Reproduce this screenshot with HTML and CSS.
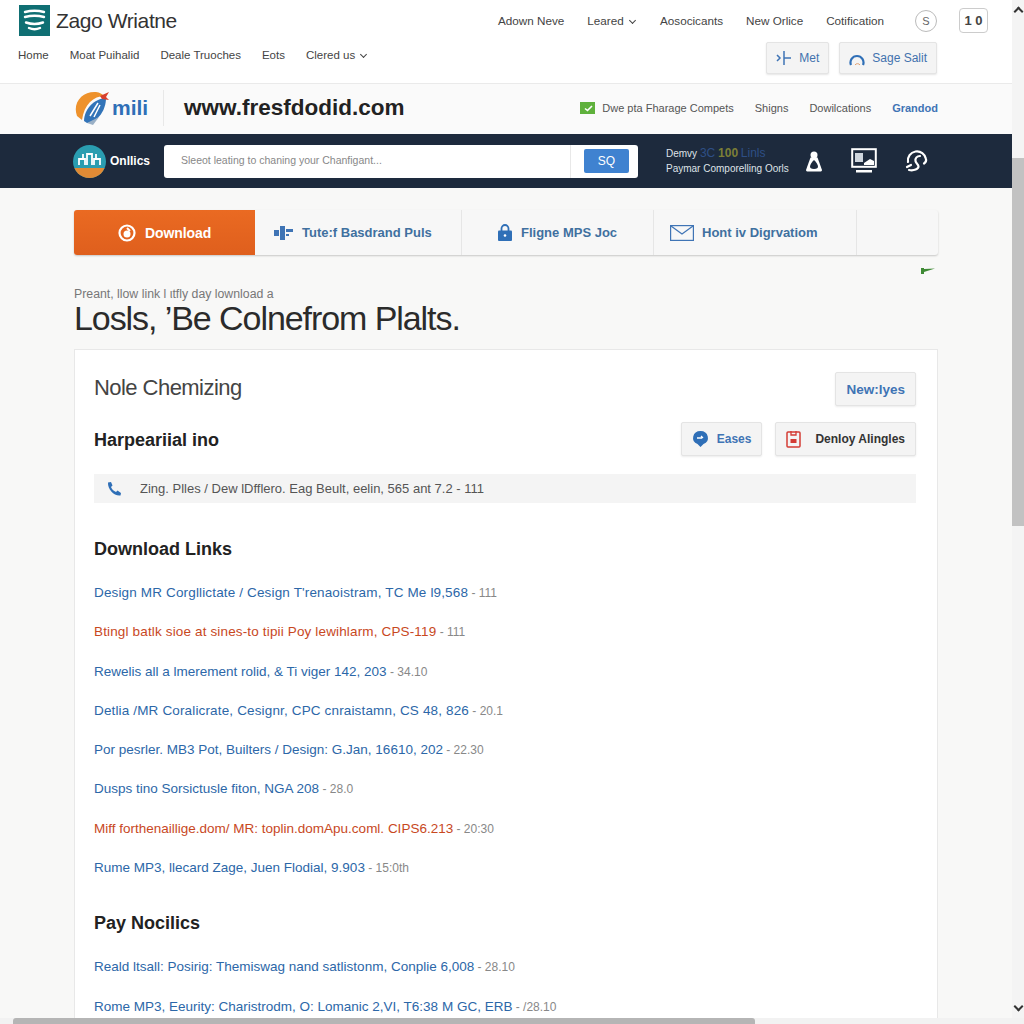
FILE: index.html
```html
<!DOCTYPE html>
<html lang="en">
<head>
    <meta charset="UTF-8">
    <meta name="viewport" content="width=device-width, initial-scale=1.0">
    <title>Zago Wriatne</title>
    <link rel="stylesheet" href="styles.css">
</head>
<body>
<div class="window">
    <div class="page">
        <header class="site-header">
            <div class="header-row">
                <div class="brand">
                    <svg class="brand-logo" viewBox="0 0 31 31">
                        <rect width="31" height="31" fill="#0f6f73"/>
                        <path d="M6 7q9.500-2.500 19 0M6 12q9.500-2.500 19 0M7 17.500q8.500 3 17 0M10 23q5.500 2.500 11 0" fill="none" stroke="#fff" stroke-width="2.4" stroke-linecap="round"/>
                    </svg>
                    <span class="brand-name">Zago Wriatne</span>
                </div>
                <nav class="top-nav">
                    <a>Adown Neve</a>
                    <a>Leared <span class="caret"></span></a>
                    <a>Aosocicants</a>
                    <a>New Orlice</a>
                    <a>Cotification</a>
                    <span class="round-icon">S</span>
                    <span class="count-box">1 0</span>
                </nav>
            </div>
            <div class="header-row second">
                <nav class="main-nav">
                    <a>Home</a>
                    <a>Moat Puihalid</a>
                    <a>Deale Truoches</a>
                    <a>Eots</a>
                    <a>Clered us <span class="caret"></span></a>
                </nav>
                <div class="header-btns">
                    <a class="small-btn">
                        <svg width="16" height="16" viewBox="0 0 16 16"><path d="M8 1v14M8 8h7M1 5l3 3-3 3" fill="none" stroke="#3f74b5" stroke-width="1.5"/></svg>
                        Met
                    </a>
                    <a class="small-btn">
                        <svg width="16" height="16" viewBox="0 0 16 16"><path d="M2 15A6.500 6.500 0 1 1 14 15" fill="none" stroke="#2f6fb7" stroke-width="2.2"/><path d="M6 15a3 3 0 0 1 5 0" fill="none" stroke="#e0a070" stroke-width="1"/></svg>
                        Sage Salit
                    </a>
                </div>
            </div>
        </header>

        <div class="domain-band">
            <div class="wrap domain-inner">
                <div class="mili">
                    <svg width="38" height="36" viewBox="0 0 38 36">
                        <path d="M3 26C-2 12 9 1 22 2c4 .5 6 2 8 4C20 6 10 14 8 30z" fill="#ee922c"/>
                        <path d="M10 31C10 20 19 9 32 8c0 12-8 24-19 25z" fill="#3274b8"/>
                        <path d="M16 26l8-13M20 27l6-12" stroke="#fff" stroke-width="1.5"/>
                        <path d="M26 6l9-4-3 5 3 3-7-1z" fill="#d8402c"/>
                        <path d="M13 33l6 2 6-8z" fill="#9ab0c6"/>
                    </svg>
                    <span>mili</span>
                </div>
                <div class="domain-name">www.fresfdodid.com</div>
                <div class="domain-links">
                    <span class="check"><svg width="14" height="11" viewBox="0 0 14 11"><path d="M4 5.500l2.500 2L11 3" fill="none" stroke="#fff" stroke-width="1.6"/></svg></span>
                    <a class="first">Dwe pta Fharage Compets</a>
                    <a>Shigns</a>
                    <a>Dowilcations</a>
                    <a class="active">Grandod</a>
                </div>
            </div>
        </div>

        <div class="search-band">
            <div class="wrap search-inner">
                <div class="onlics">
                    <svg width="33" height="33" viewBox="0 0 33 33">
                        <clipPath id="disc"><circle cx="16.5" cy="16.5" r="16.5"/></clipPath>
                        <g clip-path="url(#disc)">
                            <rect width="33" height="33" fill="#2a9db0"/>
                            <rect y="23" width="33" height="10" fill="#e08a35"/>
                            <path d="M6 20v-6h6v6M14 20V9h5v11M21 20v-6h6v6M10 14V9M23 14V9" fill="none" stroke="#fff" stroke-width="1.8"/>
                        </g>
                    </svg>
                    <span>Onllics</span>
                </div>
                <div class="search-box">
                    <span class="search-text">Sleeot leating to chaning your Chanfigant...</span>
                    <span class="search-action"><span class="search-go">SQ</span></span>
                </div>
                <div class="promo">
                    <div>Demvy <span class="promo-blue">3C</span> <span class="promo-olive">100</span> <span class="promo-blue">Linls</span></div>
                    <div>Paymar Comporelling Oorls</div>
                </div>
                <div class="band-icons">
                    <svg width="18" height="21" viewBox="0 0 18 21"><circle cx="9" cy="4" r="3.5" fill="#fff"/><path d="M5.500 6.500L1 19c0 1 1 1.500 2 1.500h12c1 0 2-.5 2-1.500L12.500 6.500z" fill="#fff"/><path d="M9 9c-2 2-4 4.500-4 6.500 0 1.500 1 2.500 4 2.500s4-1 4-2.500C13 13.500 11 11 9 9z" fill="#1d2a3d"/></svg>
                    <svg width="26" height="26" viewBox="0 0 26 26"><rect x="1.200" y="1.200" width="23.600" height="17.600" fill="none" stroke="#fff" stroke-width="2"/><rect x="4" y="5" width="8" height="9" fill="#cfd6de"/><path d="M13 15l6-4 4 2v4H13z" fill="#fff"/><path d="M5 22h16v2.500H5z" fill="#fff"/></svg>
                    <svg width="24" height="25" viewBox="0 0 24 25"><path d="M3 13A9 9 0 0 1 21 10c.5 2-.5 3.500-2 4.500" fill="none" stroke="#fff" stroke-width="2.2" stroke-linecap="round"/><path d="M15 7c-3 0-5 2-4.500 5 .4 2.500 3 3 3 5.500S9 22 4 21" fill="none" stroke="#fff" stroke-width="2.2" stroke-linecap="round"/><path d="M2 18l4-2" stroke="#fff" stroke-width="2.2" stroke-linecap="round"/></svg>
                </div>
            </div>
        </div>

        <main class="wrap content">
            <div class="tabs">
                <a class="tab tab-download">
                    <svg width="18" height="18" viewBox="0 0 18 18"><circle cx="9" cy="9" r="7.500" fill="none" stroke="#fff" stroke-width="2.2"/><circle cx="9" cy="10" r="3.500" fill="#fff"/><path d="M9 4l3 3" stroke="#fff" stroke-width="2"/></svg>
                    Download
                </a>
                <a class="tab tab-tute">
                    <svg width="20" height="16" viewBox="0 0 20 16"><path d="M0 5h5v6H0zM6 1h5v14H6zM12 4h7v3h-7zM12 9h3v2h-3z" fill="#3f74b5"/></svg>
                    Tute:f Basdrand Puls
                </a>
                <a class="tab tab-flig">
                    <svg width="14" height="17" viewBox="0 0 14 17"><path d="M3.500 7V4.500a3.500 3.500 0 0 1 7 0V7" fill="none" stroke="#2f6fb7" stroke-width="1.8"/><rect y="6.500" width="14" height="10.500" rx="1" fill="#2f6fb7"/><circle cx="7" cy="11.500" r="1.300" fill="#fff"/></svg>
                    Fligne MPS Joc
                </a>
                <a class="tab tab-hom">
                    <svg width="24" height="16" viewBox="0 0 24 16"><rect x=".6" y=".6" width="22.800" height="14.800" fill="none" stroke="#3f74b5" stroke-width="1.2"/><path d="M1 1l11 8 11-8" fill="none" stroke="#3f74b5" stroke-width="1.2"/></svg>
                    Hont iv Digrvatiom
                </a>
                <span class="tab tab-empty"></span>
            </div>
            <div class="flag-row">
                <svg width="14" height="6" viewBox="0 0 14 6"><path d="M0 0h3v6H0zM3 1l11-.500L3 4z" fill="#3f8a35"/></svg>
            </div>

            <p class="intro">Preant, llow link l ιtfly day lownload a</p>
            <h1 class="headline">Losls, &rsquo;Be Colnefrom Plalts.</h1>

            <section class="card">
                <div class="card-row first-row">
                    <h2 class="light-title">Nole Chemizing</h2>
                    <a class="btn btn-blue btn-wide">New:lyes</a>
                </div>
                <div class="card-row second-row">
                    <h3>Harpeariial ino</h3>
                    <div class="btn-group">
                        <a class="btn btn-blue">
                            <svg width="17" height="18" viewBox="0 0 17 18"><path d="M8.500 1a7.500 6.800 0 0 1 3 13l-3 3-3-3a7.500 6.800 0 0 1 3-13z" fill="#2f6fb7"/><path d="M5 8h5M9 6l2 2" stroke="#fff" stroke-width="1.3"/></svg>
                            Eases
                        </a>
                        <a class="btn btn-dark">
                            <svg width="15" height="18" viewBox="0 0 15 18"><rect x="1" y="2" width="13" height="15" rx="1" fill="none" stroke="#d33c35" stroke-width="1.5"/><path d="M5 1v4h5V1" fill="none" stroke="#d33c35" stroke-width="1.3"/><rect x="4.500" y="9" width="6" height="4" fill="#d33c35"/></svg>
                            Denloy Alingles
                        </a>
                    </div>
                </div>
                <div class="phone-strip">
                    <svg width="16" height="16" viewBox="0 0 16 16"><path d="M2 1.500L5 1l1.500 3.500L5 6c.8 2 2.500 4 5 5l1.500-1.500L15 12l-.5 2.500c-6 1-13-6-12.500-13z" fill="#2f6fb7"/></svg>
                    <span>Zing. Plles / Dew lDfflero. Eag Beult, eelin, 565 ant 7.2 - 111</span>
                </div>

                <h3 class="section-title">Download Links</h3>
                <ul class="link-list">
                    <li class="wide"><a>Design MR Corgllictate / Cesign T'renaoistram, TC Me l9,568</a><span> - 111</span></li>
                    <li class="hot wide"><a>Btingl batlk sioe at sines-to tipii Poy lewihlarm, CPS-119</a><span> - 111</span></li>
                    <li><a>Rewelis all a lmerement rolid, &amp; Ti viger 142, 203</a><span> - 34.10</span></li>
                    <li class="wide"><a>Detlia /MR Coralicrate, Cesignr, CPC cnraistamn, CS 48, 826</a><span> - 20.1</span></li>
                    <li><a>Por pesrler. MB3 Pot, Builters / Design: G.Jan, 16610, 202</a><span> - 22.30</span></li>
                    <li><a>Dusps tino Sorsictusle fiton, NGA 208</a><span> - 28.0</span></li>
                    <li class="hot"><a>Miff forthenaillige.dom/ MR: toplin.domApu.coml. CIPS6.213</a><span> - 20:30</span></li>
                    <li><a>Rume MP3, llecard Zage, Juen Flodial, 9.903</a><span> - 15:0th</span></li>
                </ul>

                <h3 class="section-title pay">Pay Nocilics</h3>
                <ul class="link-list">
                    <li><a>Reald ltsall: Posirig: Themiswag nand satlistonm, Conplie 6,008</a><span> - 28.10</span></li>
                    <li><a>Rome MP3, Eeurity: Charistrodm, O: Lomanic 2,VI, T6:38 M GC, ERB</a><span> - /28.10</span></li>
                </ul>
            </section>
        </main>
    </div>

    <div class="v-scroll">
        <span class="arrow up"></span>
        <span class="v-thumb"></span>
        <span class="arrow down"></span>
    </div>
    <div class="h-scroll">
        <span class="h-thumb"></span>
    </div>
</div>
</body>
</html>
```

FILE: styles.css
```css
* {
    box-sizing: border-box;
}
html, body {
    margin: 0;
    padding: 0;
    height: 100%;
    overflow: hidden;
}
body {
    font-family: 'Liberation Sans', Arial, sans-serif;
    color: #333;
    background: #f8f8f7;
}
h1, h2, h3, p, ul {
    margin: 0;
    padding: 0;
}
.window {
    display: grid;
    grid-template-columns: 1fr 12px;
    grid-template-rows: 1fr 6px;
    height: 1024px;
}
.page {
    overflow: hidden;
    min-width: 0;
}
.wrap {
    width: 864px;
    margin-left: 74px;
}

/* top header */
.site-header {
    height: 84px;
    background: #fff;
    border-bottom: 1px solid #eaeaea;
    padding: 5px 24px 0 18px;
}
.header-row {
    display: flex;
    justify-content: space-between;
    align-items: center;
    height: 31px;
}
.header-row.second {
    height: 38px;
}
.brand {
    display: flex;
    align-items: center;
    gap: 6px;
    padding-left: 1px;
    white-space: nowrap;
}
.brand-logo {
    display: block;
    width: 31px;
    height: 31px;
}
.brand-name {
    font-size: 21px;
    color: #333;
    letter-spacing: -.4px;
}
.top-nav {
    display: flex;
    align-items: center;
    font-size: 11.7px;
    color: #444;
}
.top-nav a {
    margin-right: 23px;
}
.top-nav a:nth-child(5) {
    margin-right: 31px;
}
.caret {
    display: inline-block;
    width: 5px;
    height: 5px;
    margin: 0 2px 2px 3px;
    border-right: 1.5px solid #444;
    border-bottom: 1.5px solid #444;
    transform: rotate(45deg);
}
.round-icon {
    width: 22px;
    height: 22px;
    border: 1px solid #bbb;
    border-radius: 50%;
    font-size: 11px;
    line-height: 20px;
    text-align: center;
    color: #666;
    margin-right: 22px;
}
.count-box {
    width: 29px;
    height: 25px;
    border: 1px solid #ccc;
    border-radius: 4px;
    font-size: 13px;
    font-weight: bold;
    line-height: 23px;
    text-align: center;
}
.main-nav {
    display: flex;
    font-size: 11.5px;
    color: #444;
}
.main-nav a {
    margin-right: 21px;
    white-space: nowrap;
}
.header-btns {
    display: flex;
    gap: 10px;
    margin: 6px 51px 0 0;
}
.small-btn {
    display: flex;
    align-items: center;
    gap: 7px;
    height: 32px;
    padding: 0 9px;
    font-size: 12px;
    color: #4272ae;
    background: #f4f4f4;
    border: 1px solid #e4e4e4;
    border-radius: 2px;
    box-shadow: 0 1px 2px rgba(0, 0, 0, 0.1);
}

/* domain band */
.domain-band {
    height: 50px;
    background: #fafafa;
}
.domain-inner {
    display: flex;
    align-items: center;
    height: 48px;
}
.mili {
    display: flex;
    align-items: center;
    width: 90px;
    height: 36px;
    border-right: 1px solid #e8e8e8;
    color: #2f6fb7;
    font-size: 21px;
    font-weight: bold;
}
.domain-name {
    margin-left: 20px;
    font-size: 22.5px;
    font-weight: bold;
    color: #222;
}
.domain-links {
    display: flex;
    align-items: center;
    margin-left: auto;
    font-size: 11px;
    color: #555;
}
.check {
    display: flex;
    align-items: center;
    justify-content: center;
    width: 15px;
    height: 12px;
    background: #5fb13c;
    margin-right: 7px;
}
.domain-links a {
    margin-left: 21px;
}
.domain-links a.first {
    margin-left: 0;
}
.domain-links a.active {
    color: #3f74b5;
    font-weight: bold;
}

/* search band */
.search-band {
    height: 54px;
    background: #1d2a3d;
    width: 1012px;
}
.search-inner {
    display: flex;
    align-items: center;
    height: 54px;
}
.onlics {
    display: flex;
    align-items: center;
    gap: 4px;
    width: 90px;
    margin-left: -1px;
    margin-right: 1px;
    font-size: 12px;
    font-weight: bold;
    color: #fff;
}
.search-box {
    display: flex;
    justify-content: space-between;
    align-items: center;
    width: 474px;
    height: 33px;
    padding: 0 9px 0 17px;
    background: #fff;
    border-radius: 3px;
}
.search-text {
    font-size: 10.5px;
    color: #888;
    margin-top: -2px;
}
.search-action {
    display: flex;
    align-items: center;
    height: 33px;
    padding-left: 13px;
    border-left: 1px solid #e8e8e8;
}
.search-go {
    display: flex;
    align-items: center;
    justify-content: center;
    width: 45px;
    height: 24px;
    background: #3f82d0;
    border-radius: 2px;
    color: #fff;
    font-size: 12px;
}
.promo {
    margin-left: 28px;
    font-size: 10px;
    line-height: 15px;
    color: #dfe3e8;
    white-space: nowrap;
}
.promo-blue {
    color: #2e4f86;
    font-size: 12px;
}
.promo-olive {
    color: #7c7f36;
    font-size: 12px;
    font-weight: bold;
}
.band-icons {
    display: flex;
    align-items: center;
    gap: 28px;
    margin-left: 16px;
}
.band-icons svg {
    display: block;
}

/* tabs */
.content {
    padding-top: 22px;
}
.tabs {
    display: flex;
    height: 45px;
    background: #f7f7f7;
    border-radius: 3px;
    box-shadow: 0 1px 2px rgba(0, 0, 0, 0.2);
}
.tab {
    display: flex;
    align-items: center;
    gap: 8px;
    font-size: 13px;
    font-weight: bold;
    color: #40709f;
    border-right: 1px solid #e6e6e6;
}
.tab-download {
    width: 181px;
    padding-left: 44px;
    gap: 9px;
    font-size: 14px;
    letter-spacing: -.1px;
    background: linear-gradient(#ea6a22, #df5f1d);
    color: #fff;
    border: none;
    border-radius: 3px 0 0 3px;
}
.tab-tute {
    width: 207px;
    padding-left: 19px;
}
.tab-flig {
    width: 192px;
    padding-left: 36px;
    gap: 9px;
}
.tab-hom {
    width: 203px;
    padding-left: 16px;
}
.tab-empty {
    flex: 1;
    border: none;
}
.flag-row {
    display: flex;
    justify-content: flex-end;
    padding: 13px 3px 0 0;
    height: 32px;
}
.intro {
    font-size: 12.3px;
    line-height: 14px;
    color: #777;
}
.headline {
    margin-top: -2px;
    font-size: 34px;
    line-height: 38px;
    font-weight: normal;
    color: #2b2b2b;
    letter-spacing: -1.07px;
}

/* card */
.card {
    margin-top: 12px;
    height: 700px;
    padding: 0 21px 0 19px;
    background: #fff;
    border: 1px solid #e8e8e8;
}
.card-row {
    display: flex;
    justify-content: space-between;
    align-items: center;
}
.first-row {
    padding-top: 22px;
}
.second-row {
    margin-top: 16px;
}
.light-title {
    font-size: 22px;
    font-weight: normal;
    color: #444;
    letter-spacing: -.55px;
    margin-top: -2px;
}
.card h3 {
    font-size: 18px;
    color: #222;
}
.second-row h3 {
    padding-top: 3px;
}
.btn {
    display: flex;
    align-items: center;
    height: 34px;
    padding: 0 10px;
    gap: 8px;
    font-size: 12px;
    font-weight: bold;
    background: #f4f4f4;
    border: 1px solid #e4e4e4;
    border-radius: 2px;
    box-shadow: 0 1px 2px rgba(0, 0, 0, 0.08);
}
.btn-blue {
    color: #3f74b5;
}
.btn-wide {
    padding: 0 10px;
    font-size: 13.5px;
}
.btn-dark {
    color: #333;
    gap: 14px;
}
.btn-group {
    display: flex;
    gap: 13px;
}
.phone-strip {
    display: flex;
    align-items: center;
    gap: 18px;
    height: 29px;
    margin-top: 18px;
    padding-left: 12px;
    background: #f4f4f4;
    font-size: 13px;
    color: #555;
}
.section-title {
    margin-top: 36px;
    line-height: 21px;
}
.section-title.pay {
    margin-top: 26px;
}
.link-list {
    list-style: none;
    margin-top: 13px;
}
.link-list li {
    height: 39.3px;
    line-height: 39.3px;
    font-size: 13.5px;
    white-space: nowrap;
}
.link-list li.wide a {
    letter-spacing: .15px;
}
.link-list a {
    color: #2c67a8;
}
.link-list span {
    color: #888;
    font-size: 12px;
}
.link-list .hot a {
    color: #c8481e;
}

/* fake scrollbars */
.v-scroll {
    display: flex;
    flex-direction: column;
    align-items: center;
    background: #f4f4f4;
    padding-top: 8px;
}
.v-thumb {
    width: 12px;
    height: 368px;
    margin-top: 143px;
    background: #c2c2c2;
}
.arrow {
    flex: none;
    width: 7px;
    height: 7px;
    border-left: 2px solid #333;
    border-top: 2px solid #333;
}
.arrow.up {
    transform: rotate(45deg);
}
.arrow.down {
    margin-top: auto;
    margin-bottom: 8px;
    transform: rotate(225deg);
}
.h-scroll {
    grid-column: 1 / 3;
    background: #f2f2f2;
    padding-left: 13px;
}
.h-thumb {
    display: block;
    width: 742px;
    height: 6px;
    background: #b5b5b5;
    border-radius: 3px 3px 0 0;
}
```
